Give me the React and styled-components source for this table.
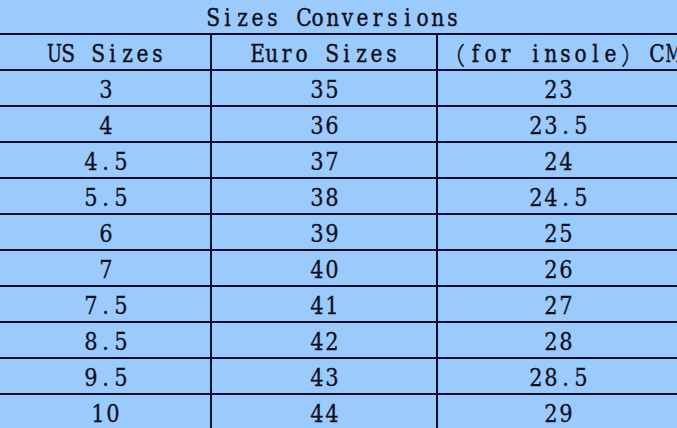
import React from "react";
import styled, { createGlobalStyle } from "styled-components";

const GlobalStyle = createGlobalStyle`
  html, body {
    margin: 0;
    padding: 0;
    background: #9bcbfd;
    overflow: hidden;
  }
`;

const LINE = "#0c0c2c";
const INK = "#10101c";
const SERIF = `"DejaVu Serif", "Liberation Serif", serif`;

const Sheet = styled.div`
  width: 677px;
  height: 428px;
  overflow: hidden;
  background: #9bcbfd;
  color: ${INK};
  font-family: ${SERIF};
`;

const Title = styled.div`
  box-sizing: border-box;
  height: 35px;
  width: 678px;
  border-bottom: 2px solid ${LINE};
  display: flex;
  align-items: center;
  justify-content: center;
  padding: 3px 14px 0 0;
  font-size: 24px;
  -webkit-text-stroke: 0.45px ${INK};
`;

const Grid = styled.div`
  display: grid;
  grid-template-columns: 212px 226px 240px;
  grid-auto-rows: 36px;
`;

const Cell = styled.div`
  box-sizing: border-box;
  border-bottom: 2px solid ${LINE};
  border-right: ${(p) => (p.$last ? "none" : `2px solid ${LINE}`)};
  display: flex;
  align-items: center;
  justify-content: center;
  padding-top: 3px;
  white-space: nowrap;
  font-size: ${(p) => (p.$head ? 24 : 25)}px;
  -webkit-text-stroke: ${(p) => (p.$head ? 0.45 : 0.3)}px ${INK};
`;

// monospaced character cells, full-width glyphs take two cells
const Ch = styled.span`
  display: inline-block;
  width: ${(p) => (p.$wide ? 30 : 15)}px;
  text-align: center;
  white-space: pre;
  font-family: ${(p) => (p.$wide ? `"Noto Sans CJK SC", sans-serif` : SERIF)};
  font-weight: ${(p) => (p.$wide ? 300 : 400)};
  transform: scaleX(${(p) => p.$squeeze});
`;

// capitals too broad for a half-width cell
const squeezeFor = { M: 0.66, W: 0.66, U: 0.74 };

function Mono({ text }) {
  return (
    <>
      {text.split("").map((c, i) => {
        const wide = c.charCodeAt(0) > 0x2e80;
        const squeeze = wide ? 1 : squeezeFor[c] || 0.84;
        return (
          <Ch key={i} $wide={wide} $squeeze={squeeze}>
            {c}
          </Ch>
        );
      })}
    </>
  );
}

const headers = ["US Sizes", "Euro Sizes", "（for insole）CM"];

const rows = [
  ["3", "35", "23"],
  ["4", "36", "23.5"],
  ["4.5", "37", "24"],
  ["5.5", "38", "24.5"],
  ["6", "39", "25"],
  ["7", "40", "26"],
  ["7.5", "41", "27"],
  ["8.5", "42", "28"],
  ["9.5", "43", "28.5"],
  ["10", "44", "29"],
];

export default function App() {
  return (
    <>
      <GlobalStyle />
      <Sheet>
        <Title>
          <Mono text="Sizes Conversions" />
        </Title>
        <Grid>
          {headers.map((h, i) => (
            <Cell key={h} $head $last={i === 2}>
              <Mono text={h} />
            </Cell>
          ))}
          {rows.map((r, ri) =>
            r.map((v, ci) => (
              <Cell key={ri + "-" + ci} $last={ci === 2}>
                <Mono text={v} />
              </Cell>
            ))
          )}
        </Grid>
      </Sheet>
    </>
  );
}
